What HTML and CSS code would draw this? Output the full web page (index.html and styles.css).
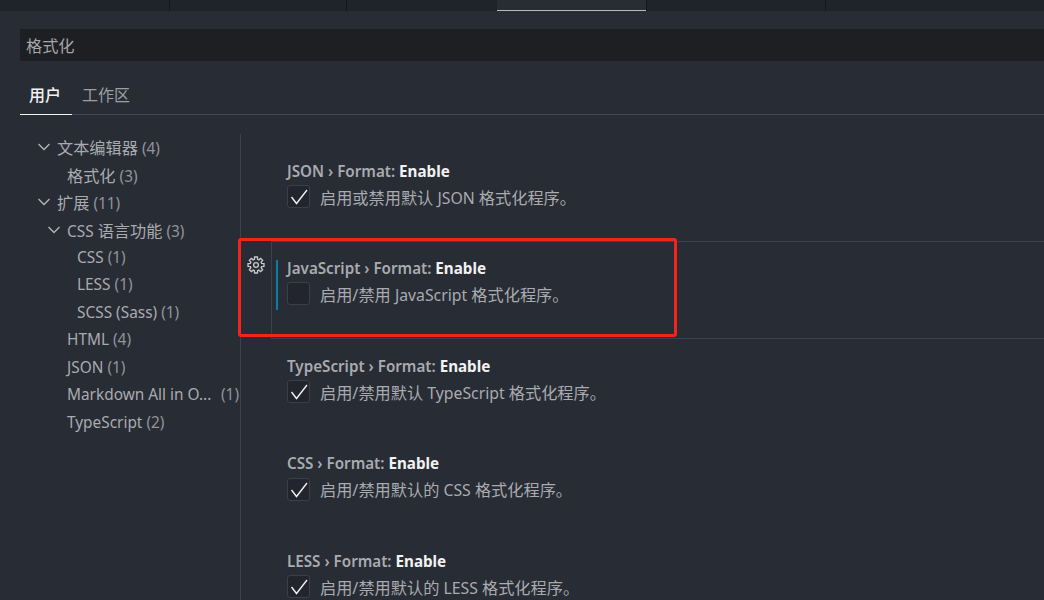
FILE: index.html
```html
<!DOCTYPE html>
<html lang="zh-CN">
<head>
<meta charset="utf-8">
<title>设置</title>
<link rel="stylesheet" href="styles.css">
</head>
<body>
<div class="tabbar">
  <div class="etab w1"></div>
  <div class="etab w2"></div>
  <div class="etab w3"></div>
  <div class="etab w4 active"></div>
  <div class="etab w5"></div>
  <div class="etab w6"></div>
</div>
<main class="editor">
  <div class="search">格式化</div>
  <nav class="scopes">
    <span class="scope on">用户</span>
    <span class="scope">工作区</span>
  </nav>
  <div class="body">
    <aside class="tree">
      <div class="row l0"><svg class="chev" viewBox="0 0 16 16"><path d="M2.500 5 8 10.500 13.500 5"/></svg><span><i>文本编辑器</i> <span class="n">(4)</span></span></div>
      <div class="row l1"><span><i>格式化</i> <span class="n">(3)</span></span></div>
      <div class="row l0"><svg class="chev" viewBox="0 0 16 16"><path d="M2.500 5 8 10.500 13.500 5"/></svg><span><i>扩展</i> <span class="n">(11)</span></span></div>
      <div class="row l1b"><svg class="chev" viewBox="0 0 16 16"><path d="M2.500 5 8 10.500 13.500 5"/></svg><span>CSS <i>语言功能</i> <span class="n">(3)</span></span></div>
      <div class="row l2"><span>CSS <span class="n">(1)</span></span></div>
      <div class="row l2"><span>LESS <span class="n">(1)</span></span></div>
      <div class="row l2"><span>SCSS (Sass) <span class="n">(1)</span></span></div>
      <div class="row l1"><span>HTML <span class="n">(4)</span></span></div>
      <div class="row l1"><span>JSON <span class="n">(1)</span></span></div>
      <div class="row l1"><span class="trunc">Markdown All in O...</span><span class="n">(1)</span></div>
      <div class="row l1"><span>TypeScript <span class="n">(2)</span></span></div>
    </aside>
    <section class="list">
      <article class="item">
        <div class="title">JSON › Format: <b>Enable</b></div>
        <label class="line"><span class="box"><svg viewBox="0 0 21 21"><path d="M3.500 11 8.500 17.500 19 4"/></svg></span><span><i>启用或禁用默认</i> JSON <i>格式化程序。</i></span></label>
      </article>
      <article class="item focus">
        <svg class="gear" viewBox="0 0 16 16"><path d="M6.570 3 6.750.91h2.500L9.430 3l1.090.45 1.610-1.350 1.770 1.770-1.350 1.610.45 1.090 2.090.18v2.500L13 9.430l-.45 1.090 1.350 1.610-1.770 1.770-1.610-1.350-1.090.45-.18 2.090h-2.500L6.570 13l-1.090-.45-1.610 1.350-1.770-1.770 1.350-1.610L3 9.430.91 9.250v-2.500L3 6.570l.45-1.090-1.350-1.610 1.770-1.770 1.610 1.350z"/><circle cx="8" cy="8" r="2.100"/></svg>
        <div class="title">JavaScript › Format: <b>Enable</b></div>
        <label class="line"><span class="box"></span><span><i>启用/禁用</i> JavaScript <i>格式化程序。</i></span></label>
      </article>
      <article class="item">
        <div class="title">TypeScript › Format: <b>Enable</b></div>
        <label class="line"><span class="box"><svg viewBox="0 0 21 21"><path d="M3.500 11 8.500 17.500 19 4"/></svg></span><span><i>启用/禁用默认</i> TypeScript <i>格式化程序。</i></span></label>
      </article>
      <article class="item">
        <div class="title">CSS › Format: <b>Enable</b></div>
        <label class="line"><span class="box"><svg viewBox="0 0 21 21"><path d="M3.500 11 8.500 17.500 19 4"/></svg></span><span><i>启用/禁用默认的</i> CSS <i>格式化程序。</i></span></label>
      </article>
      <article class="item">
        <div class="title">LESS › Format: <b>Enable</b></div>
        <label class="line"><span class="box"><svg viewBox="0 0 21 21"><path d="M3.500 11 8.500 17.500 19 4"/></svg></span><span><i>启用/禁用默认的</i> LESS <i>格式化程序。</i></span></label>
      </article>
    </section>
  </div>
</main>
<div class="callout"></div>
</body>
</html>
```
FILE: styles.css
```css
* { box-sizing: border-box; }
html, body { margin: 0; height: 600px; overflow: hidden; }
body {
  background: #282c35;
  color: #b4b6ba;
  font-family: "Noto Sans", "Noto Sans CJK SC", sans-serif;
  font-size: 15.400px;
  position: relative;
}
i { font-style: normal; font-size: 16.200px; }
.tabbar { display: flex; height: 11px; background: #1f232a; }
.etab { height: 11px; }
.w1 { width: 170px; border-right: 1px solid #14161a; }
.w2 { width: 177px; border-right: 1px solid #14161a; }
.w3 { width: 150px; }
.w4 { width: 149px; background: #282c35; border-bottom: 1px solid #b9bbbb; }
.w5 { width: 180px; border-left: 1px solid #14161a; border-right: 1px solid #14161a; }
.w6 { flex: 1; }
.editor { padding: 18px 0 0 20px; }
.search {
  height: 32px;
  line-height: 35px;
  padding-left: 6px;
  background: #1e1f23;
  color: #a4a6aa;
  font-size: 16.200px;
}
.scopes {
  display: flex;
  margin-top: 24px;
  height: 30px;
  border-bottom: 1px solid #44465a;
}
.scope { height: 30px; line-height: 20px; color: #9c9ea2; font-size: 16px; }
.scope.on { color: #f2f2f2; border-bottom: 1px solid #f2f2f2; width: 52px; margin-right: 10px; padding-left: 9px; font-weight: 500; }
.body { display: flex; margin-left: -20px; margin-top: 19px; }
.tree { width: 241px; height: 500px; border-right: 1px solid #3e414d; flex: none; }
.row { height: 27.500px; padding-bottom: 1.500px; white-space: nowrap; color: #a9abaf; display: flex; align-items: center; }
.row .n { color: #92949a; }
.chev { width: 16px; height: 16px; fill: none; stroke: #b4b6ba; stroke-width: 1.300; margin-right: 5px; flex: none; }
.l0 { padding-left: 36px; }
.l1 { padding-left: 67px; }
.l1b { padding-left: 46px; }
.l2 { padding-left: 77px; }
.trunc { width: 154px; overflow: hidden; }
.list { flex: 1; padding-top: 26.600px; }
.item { position: relative; height: 97.500px; padding-left: 46px; }
.title { height: 21px; line-height: 21px; font-weight: 600; font-size: 15.200px; color: #a9abaf; white-space: nowrap; }
.title b { font-weight: 700; color: #f2f2f2; }
.line { display: flex; align-items: center; height: 24px; margin-top: 3px; white-space: nowrap; color: #a9abaf; font-size: 15.800px; }
.box {
  width: 23px; height: 23px; margin-right: 10px;
  background: #22252d;
  border: 1px solid #3c3f4b;
  border-radius: 3px;
  flex: none;
}
.box svg { display: block; width: 21px; height: 21px; fill: none; stroke: #f0f0f0; stroke-width: 1.400; }
.item.focus {
  margin: -17.600px 0 16.600px 30px;
  padding: 16px 0 0 15px;
  height: 98.500px;
  border: 1px solid #3e414d;
  border-right: 0;
}
.item.focus::before {
  content: "";
  position: absolute;
  left: 4px; top: 18px;
  width: 2px; height: 50px;
  background: #0b7ea3;
}
.gear {
  position: absolute;
  left: -25px; top: 14px;
  width: 18px; height: 18px;
  fill: none; stroke: #c8c8c8; stroke-width: 1.200;
}
.callout {
  position: absolute;
  left: 238px; top: 238px;
  width: 439px; height: 99px;
  border: 3px solid #f5231b;
  border-radius: 3px;
}
```
